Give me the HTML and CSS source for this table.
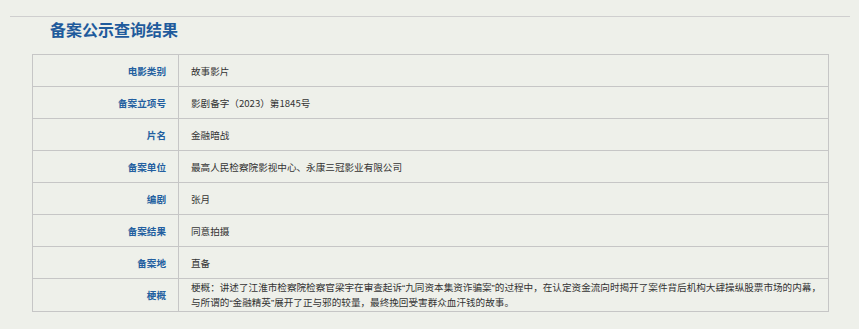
FILE: index.html
```html
<!DOCTYPE html>
<html lang="zh-CN">
<head>
<meta charset="utf-8">
<title>备案公示查询结果</title>
<link rel="stylesheet" href="styles.css">
</head>
<body>
<div class="panel">
  <h1 class="title">备案公示查询结果</h1>
  <table class="result">
    <tr><th>电影类别</th><td>故事影片</td></tr>
    <tr><th>备案立项号</th><td>影剧备字（2023）第1845号</td></tr>
    <tr><th>片名</th><td>金融暗战</td></tr>
    <tr><th>备案单位</th><td>最高人民检察院影视中心、永康三冠影业有限公司</td></tr>
    <tr><th>编剧</th><td>张月</td></tr>
    <tr><th>备案结果</th><td>同意拍摄</td></tr>
    <tr><th>备案地</th><td>直备</td></tr>
    <tr><th>梗概</th><td class="synopsis">梗概：讲述了江淮市检察院检察官梁宇在审查起诉<span class="q">“</span>九同资本集资诈骗案<span class="q">”</span>的过程中，在认定资金流向时揭开了案件背后机构大肆操纵股票市场的内幕，与所谓的<span class="q">“</span>金融精英<span class="q">”</span>展开了正与邪的较量，最终挽回受害群众血汗钱的故事。</td></tr>
  </table>
</div>
</body>
</html>
```

FILE: styles.css
```css
html, body {
  margin: 0;
  padding: 0;
}
body {
  background: #eef0ea;
  font-family: "Noto Sans CJK SC", "Liberation Sans", sans-serif;
  color: #333;
}
.panel {
  margin: 16px 9px 0 10px;
  border-top: 1px solid #cfcfcf;
  padding-bottom: 18px;
}
.title {
  margin: 0 0 13px 40px;
  font-size: 16px;
  line-height: 24px;
  font-weight: bold;
  color: #1f5b9c;
}
.result {
  margin-left: 22px;
  width: 797px;
  border-collapse: collapse;
  font-size: 9.6px;
}
.result th,
.result td {
  border: 1px solid #c6c6c6;
  height: 31px;
  padding: 0;
  vertical-align: middle;
}
.result th {
  width: 133px;
  padding-right: 12px;
  text-align: right;
  font-weight: bold;
  color: #235fa0;
}
.result td {
  padding-left: 12px;
  padding-right: 4px;
  text-align: left;
  color: #333;
}
.result td.synopsis {
  line-height: 15px;
  vertical-align: top;
  padding-top: 1px;
}
.q {
  font-family: "Liberation Sans", sans-serif;
}
```
